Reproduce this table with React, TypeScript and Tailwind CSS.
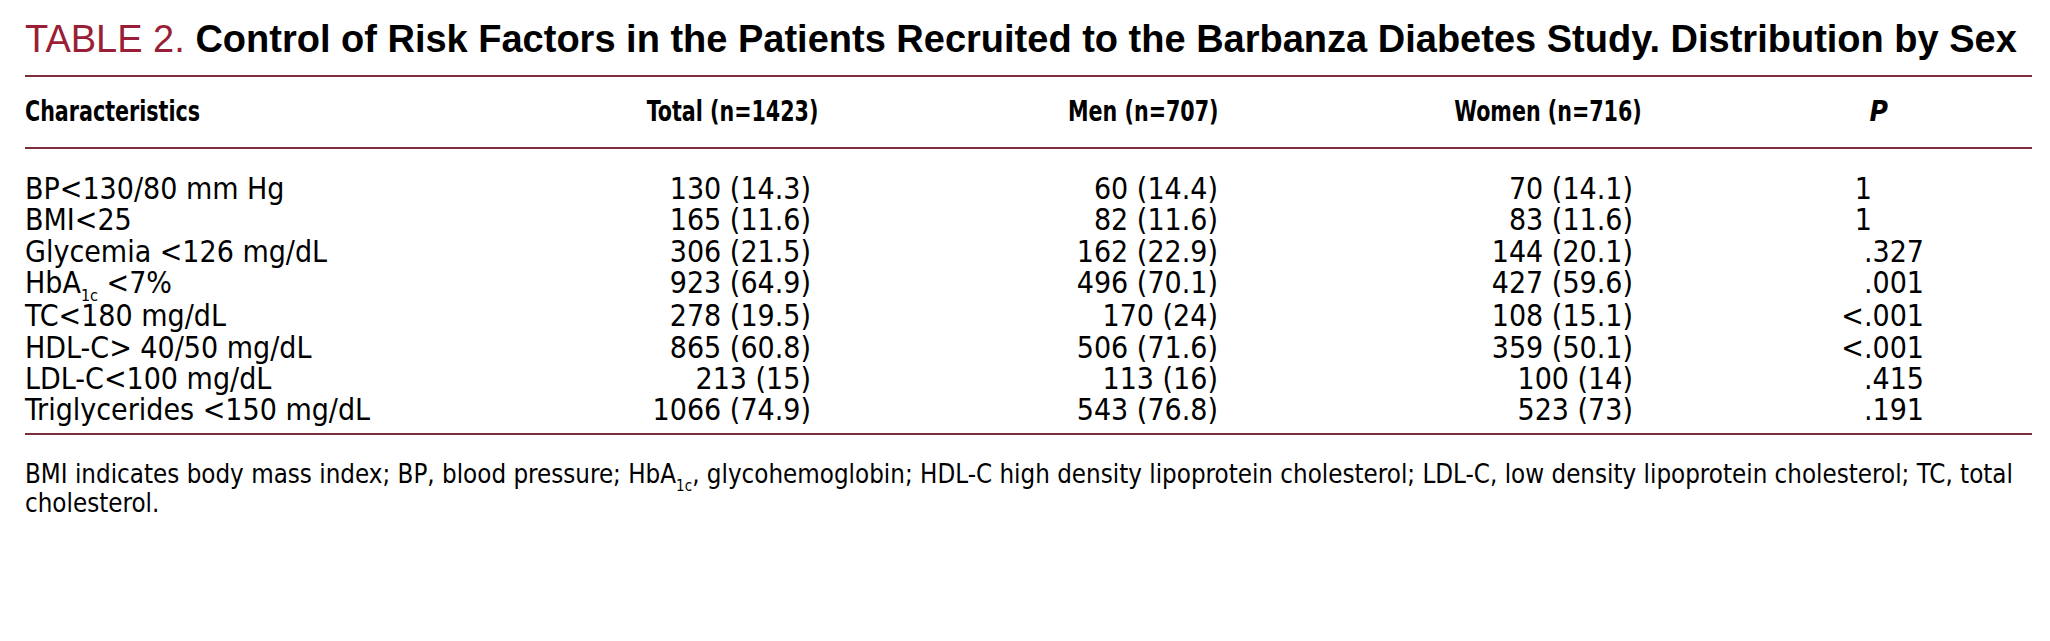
import React from 'react';

type Row = {
  label: React.ReactNode;
  total: string;
  men: string;
  women: string;
  p: string;
};

const HbA = ({ size = 'row' }: { size?: 'row' | 'note' }) => (
  <>
    HbA
    <sub className={size === 'row' ? 'text-[16px] align-[-4px] leading-none' : 'text-[15px] align-[-4px] leading-none'}>
      1c
    </sub>
  </>
);

const rows: Row[] = [
  { label: 'BP<130/80 mm Hg', total: '130 (14.3)', men: '60 (14.4)', women: '70 (14.1)', p: '1' },
  { label: 'BMI<25', total: '165 (11.6)', men: '82 (11.6)', women: '83 (11.6)', p: '1' },
  { label: 'Glycemia <126 mg/dL', total: '306 (21.5)', men: '162 (22.9)', women: '144 (20.1)', p: '.327' },
  { label: <><HbA /> &lt;7%</>, total: '923 (64.9)', men: '496 (70.1)', women: '427 (59.6)', p: '.001' },
  { label: 'TC<180 mg/dL', total: '278 (19.5)', men: '170 (24)', women: '108 (15.1)', p: '<.001' },
  { label: 'HDL-C> 40/50 mg/dL', total: '865 (60.8)', men: '506 (71.6)', women: '359 (50.1)', p: '<.001' },
  { label: 'LDL-C<100 mg/dL', total: '213 (15)', men: '113 (16)', women: '100 (14)', p: '.415' },
  { label: 'Triglycerides <150 mg/dL', total: '1066 (74.9)', men: '543 (76.8)', women: '523 (73)', p: '.191' },
];

const cols = 'grid grid-cols-[575px_218px_401px_423px_282px]';

export default function App() {
  return (
    <div className="w-[2050px] h-[641px] bg-white pl-[25px] pr-[18px] text-black font-['Liberation_Sans',Arial,sans-serif]">
      {/* 标题 */}
      <h1 className="pt-[17px] mb-[14px] text-[38px] leading-[44px] whitespace-nowrap">
        <span className="text-[#9a1f36]">TABLE 2. </span>
        <span className="font-bold">
          Control of Risk Factors in the Patients Recruited to the Barbanza Diabetes Study. Distribution by Sex
        </span>
      </h1>

      <div className="font-['DejaVu_Sans_Condensed','Liberation_Sans',sans-serif]">
        {/* 表头 */}
        <div className={`${cols} h-[74px] items-center border-y-2 border-[#7b2d3c] text-[28px] font-bold`}>
          <div>
            <span className="inline-block scale-x-[0.82] origin-left">Characteristics</span>
          </div>
          <div className="text-right">
            <span className="inline-block scale-x-[0.82] origin-right">Total (n=1423)</span>
          </div>
          <div className="text-right">
            <span className="inline-block scale-x-[0.82] origin-right">Men (n=707)</span>
          </div>
          <div className="text-right">
            <span className="inline-block scale-x-[0.82] origin-right">Women (n=716)</span>
          </div>
          <div className="text-right pr-[36px] italic">P</div>
        </div>

        {/* 数据 */}
        <div className="pt-[24px] pb-[7px] border-b-2 border-[#7b2d3c] text-[30px] leading-[31.4px]">
          {rows.map((r, i) => (
            <div key={i} className={cols}>
              <div>{r.label}</div>
              <div className="text-right pr-[7px]">{r.total}</div>
              <div className="text-right pr-[1px]">{r.men}</div>
              <div className="text-right pr-[9px]">{r.women}</div>
              <div className={r.p === '1' ? 'text-right pr-[52px]' : 'text-right'}>{r.p}</div>
            </div>
          ))}
        </div>

        {/* 注释 */}
        <p className="pt-[26px] text-[25.7px] leading-[27px]">
          BMI indicates body mass index; BP, blood pressure; <HbA size="note" />, glycohemoglobin; HDL-C high density
          lipoprotein cholesterol; LDL-C, low density lipoprotein cholesterol; TC, total cholesterol.
        </p>
      </div>
    </div>
  );
}
